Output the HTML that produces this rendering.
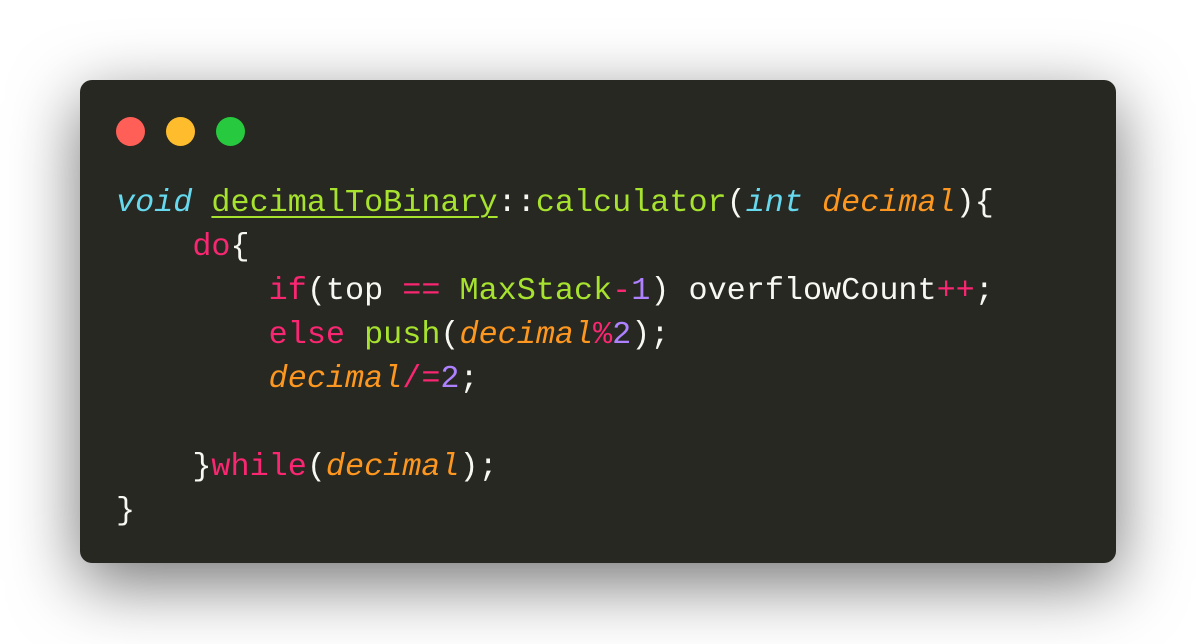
<!DOCTYPE html>
<html><head><meta charset="utf-8"><style>
html,body{margin:0;padding:0;background:#fff;width:1196px;height:644px;overflow:hidden}
.win{position:absolute;left:80px;top:80px;width:1036px;height:483px;background:#272822;border-radius:12px;box-shadow:0 20px 68px rgba(0,0,0,0.55)}
.dot{position:absolute;top:117px;width:29px;height:29px;border-radius:50%}
pre{position:absolute;left:116px;top:181px;margin:0;font-family:"Liberation Mono",monospace;font-size:31.8px;line-height:44px;color:#f8f8f2}
.k{color:#f92672}.t{color:#66d9ef;font-style:italic}.f{color:#a6e22e}.p{color:#fd971f;font-style:italic}.n{color:#ae81ff}.u{text-decoration:underline;text-underline-offset:5px;text-decoration-thickness:2px}
</style></head><body>
<div class="win"></div>
<div class="dot" style="left:116px;background:#ff5f56"></div>
<div class="dot" style="left:166px;background:#ffbd2e"></div>
<div class="dot" style="left:216px;background:#27c93f"></div>
<pre><span class="t">void</span> <span class="f u">decimalToBinary</span>::<span class="f">calculator</span>(<span class="t">int</span> <span class="p">decimal</span>){
    <span class="k">do</span>{
        <span class="k">if</span>(top <span class="k">==</span> <span class="f">MaxStack</span><span class="k">-</span><span class="n">1</span>) overflowCount<span class="k">++</span>;
        <span class="k">else</span> <span class="f">push</span>(<span class="p">decimal</span><span class="k">%</span><span class="n">2</span>);
        <span class="p">decimal</span><span class="k">/=</span><span class="n">2</span>;

    }<span class="k">while</span>(<span class="p">decimal</span>);
}</pre>
</body></html>
